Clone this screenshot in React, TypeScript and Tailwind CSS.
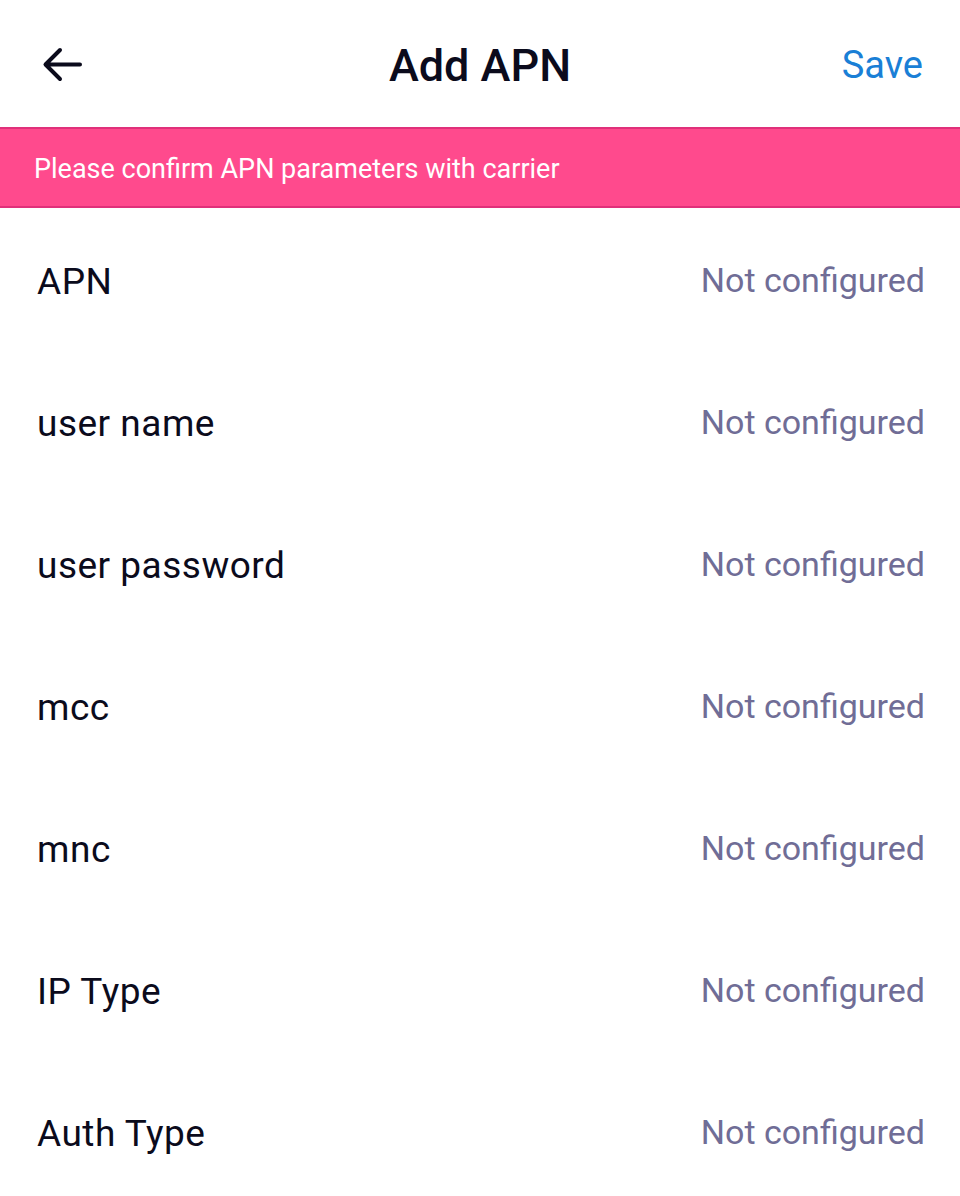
import React from "react";

const rows = ["APN", "user name", "user password", "mcc", "mnc", "IP Type", "Auth Type"];

export default function App() {
  return (
    <div className="w-[960px] h-[1196px] bg-white overflow-hidden" style={{ fontFamily: "Roboto, 'Noto Sans', sans-serif" }}>
      <div className="h-[127px] flex items-center justify-between px-[40px] relative">
        <svg width="44" height="40" viewBox="0 0 44 40" className="mt-[2px]">
          <path d="M40 19.5H7M20 5L5.5 19.5L20 34" stroke="#0b0b1c" strokeWidth="4" fill="none" strokeLinecap="round" strokeLinejoin="round" />
        </svg>
        <div className="absolute left-0 right-0 top-0 h-[127px] flex items-center justify-center text-[45px] font-medium text-[#0b0b1c] pointer-events-none pt-[4px]">Add APN</div>
        <div className="text-[38px] text-[#1a7fd6] mr-[-3px] pt-[4px]">Save</div>
      </div>
      <div className="h-[81px] bg-[#ff4a8d] border-y-2 border-[#e0307a] flex items-center px-[34px] pt-[3px] text-white text-[27px]">
        Please confirm APN parameters with carrier
      </div>
      {rows.map((r) => (
        <div key={r} className="h-[142px] flex items-center justify-between pl-[37px] pr-[35px] pt-[5px]">
          <div className="text-[37px] tracking-[0.5px] text-[#0b0b1c]">{r}</div>
          <div className="text-[34px] text-[#706d96] mb-[3px]">Not configured</div>
        </div>
      ))}
    </div>
  );
}
